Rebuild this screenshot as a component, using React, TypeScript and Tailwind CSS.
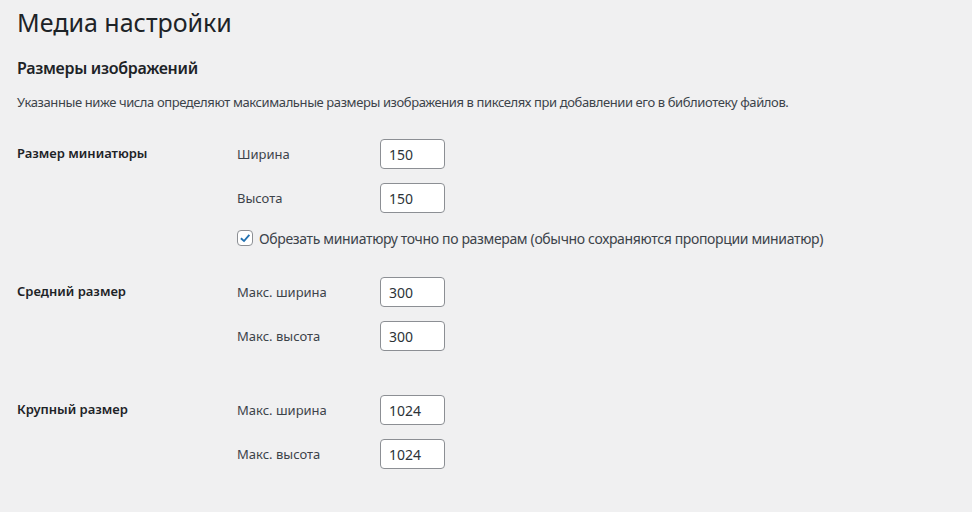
import React from 'react'

type Field = { label: string; value: string }

function SizeInput({ value }: { value: string }) {
  return (
    <input
      type="text"
      defaultValue={value}
      className="h-[30px] w-[65px] rounded-[4px] border border-[#8c8f94] bg-white px-[8px] text-[14px] text-[#2c3338] outline-none"
    />
  )
}

function SizeSection({ title, fields, children, className = '' }: { title: string; fields: Field[]; children?: React.ReactNode; className?: string }) {
  return (
    <div className={`flex ${className}`}>
      <div className="flex h-[30px] w-[220px] shrink-0 items-center text-[13px] font-semibold text-[#1d2327]">{title}</div>
      <div className="flex flex-col gap-[14px]">
        {fields.map((f) => (
          <div key={f.label} className="flex h-[30px] items-center">
            <label className="w-[143px] pt-[1px] text-[13px]">{f.label}</label>
            <SizeInput value={f.value} />
          </div>
        ))}
        {children}
      </div>
    </div>
  )
}

export default function App() {
  return (
    <div className="min-h-screen bg-[#f0f0f1] px-[17px] text-[#3c434a] [font-family:'Noto_Sans','Open_Sans',sans-serif]">
      {/* Page title */}
      <h1 className="pt-[8px] text-[25px] font-normal leading-[29px] text-[#1d2327]">Медиа настройки</h1>

      {/* Section heading */}
      <h2 className="mt-[20px] text-[16px] font-semibold leading-[22px] tracking-[-0.3px] text-[#1d2327]">Размеры изображений</h2>
      <p className="mt-[13px] text-[13px] leading-[20px] tracking-[-0.4px]">
        Указанные ниже числа определяют максимальные размеры изображения в пикселях при добавлении его в библиотеку файлов.
      </p>

      <SizeSection
        className="mt-[27px]"
        title="Размер миниатюры"
        fields={[
          { label: 'Ширина', value: '150' },
          { label: 'Высота', value: '150' },
        ]}
      >
        <label className="mt-[1px] flex h-[20px] items-center gap-[6px] text-[14px] tracking-[-0.35px]">
          <span className="flex h-[16px] w-[16px] items-center justify-center rounded-[4px] border border-[#8c8f94] bg-white">
            <svg viewBox="0 0 20 20" className="h-[18px] w-[18px]">
              <path d="M15.2 4.8 8.5 12.6 5 9.4 3.2 11.3 8.7 16.2 17.2 6.6Z" fill="#2271b1" />
            </svg>
          </span>
          Обрезать миниатюру точно по размерам (обычно сохраняются пропорции миниатюр)
        </label>
      </SizeSection>

      <SizeSection
        className="mt-[29px]"
        title="Средний размер"
        fields={[
          { label: 'Макс. ширина', value: '300' },
          { label: 'Макс. высота', value: '300' },
        ]}
      />

      <SizeSection
        className="mt-[44px]"
        title="Крупный размер"
        fields={[
          { label: 'Макс. ширина', value: '1024' },
          { label: 'Макс. высота', value: '1024' },
        ]}
      />
    </div>
  )
}
